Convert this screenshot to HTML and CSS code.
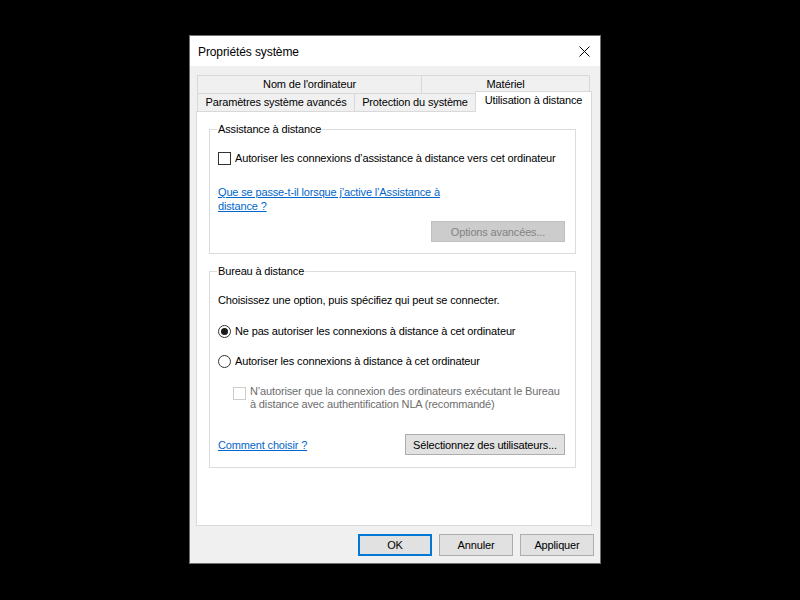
FILE: index.html
```html
<!DOCTYPE html>
<html lang="fr">
<head>
    <meta charset="UTF-8">
    <meta name="viewport" content="width=device-width, initial-scale=1.0">
    <title>Propriétés système</title>
    <link rel="stylesheet" href="styles.css">
</head>
<body>
    <div class="window">
        <div class="titlebar">
            <span class="title">Propriétés système</span>
            <span class="close">
                <svg width="11" height="11" viewBox="0 0 11 11">
                    <path d="M0.5 0.5 L10.5 10.5 M10.5 0.5 L0.5 10.5" stroke="#000" stroke-width="1" fill="none"/>
                </svg>
            </span>
        </div>
        <div class="body">
            <div class="tabs">
                <div class="tab-row">
                    <div class="tab t-nom">Nom de l'ordinateur</div>
                    <div class="tab t-mat">Matériel</div>
                </div>
                <div class="tab-row low">
                    <div class="tab t-par">Paramètres système avancés</div>
                    <div class="tab t-pro">Protection du système</div>
                    <div class="tab t-uti active">Utilisation à distance</div>
                </div>
            </div>
            <div class="panel">
                <fieldset class="group g-assist">
                    <legend>Assistance à distance</legend>
                    <label class="row check-row">
                        <span class="box"></span>
                        Autoriser les connexions d’assistance à distance vers cet ordinateur
                    </label>
                    <a class="link help" href="#">Que se passe-t-il lorsque j’active l’Assistance à<br>distance ?</a>
                    <div class="btn-line">
                        <button class="btn disabled" disabled>Options avancées...</button>
                    </div>
                </fieldset>
                <fieldset class="group g-bureau">
                    <legend>Bureau à distance</legend>
                    <p class="intro">Choisissez une option, puis spécifiez qui peut se connecter.</p>
                    <label class="row radio-row first">
                        <span class="radio checked"></span>
                        Ne pas autoriser les connexions à distance à cet ordinateur
                    </label>
                    <label class="row radio-row">
                        <span class="radio"></span>
                        Autoriser les connexions à distance à cet ordinateur
                    </label>
                    <label class="nla">
                        <span class="box off"></span>
                        <span class="nla-text">N’autoriser que la connexion des ordinateurs exécutant le Bureau<br>à distance avec authentification NLA (recommandé)</span>
                    </label>
                    <div class="btn-line split">
                        <a class="link" href="#">Comment choisir ?</a>
                        <button class="btn users">Sélectionnez des utilisateurs...</button>
                    </div>
                </fieldset>
            </div>
            <div class="footer">
                <button class="btn dlg default">OK</button>
                <button class="btn dlg">Annuler</button>
                <button class="btn dlg">Appliquer</button>
            </div>
        </div>
    </div>
</body>
</html>
```

FILE: styles.css
```css
/* Reset */
* {
    margin: 0;
    padding: 0;
    box-sizing: border-box;
}

body {
    background: #000;
    font-family: "Liberation Sans", Arial, sans-serif;
    font-size: 11px;
    letter-spacing: -0.15px;
    color: #000;
    padding: 35px 0 0 189px;
    height: 600px;
    overflow: hidden;
}

/* Dialog frame */
.window {
    width: 412px;
    height: 529px;
    border: 1px solid #6f6f6f;
    background: #f0f0f0;
    display: flex;
    flex-direction: column;
}

.titlebar {
    height: 30px;
    flex: none;
    background: #fff;
    display: flex;
    align-items: center;
    justify-content: space-between;
    padding: 0 10px 0 8px;
}

.title {
    font-size: 12px;
    letter-spacing: -0.1px;
    padding-top: 1px;
}

.close {
    display: flex;
}

.body {
    flex: 1;
    padding: 9px 0 0 6px;
}

/* Tabs */
.tab-row {
    display: flex;
    height: 18px;
    padding-left: 1px;
}

.tab-row.low {
    align-items: flex-end;
}

.tab {
    height: 18px;
    border: 1px solid #d9d9d9;
    border-bottom: none;
    background: #f0f0f0;
    text-align: center;
    line-height: 17px;
    white-space: nowrap;
}

.tab + .tab {
    margin-left: -1px;
}

.t-nom { width: 225px; }
.t-mat { width: 169px; }
.t-par { width: 158px; }
.t-pro { width: 122px; }

/* selected tab sits 2px higher and hides the page border below it */
.tab.active {
    width: 117px;
    height: 21px;
    background: #fff;
    margin-top: -2px;
    margin-bottom: -1px;
    line-height: 17px;
    position: relative;
    z-index: 1;
}

/* Tab page */
.panel {
    width: 396px;
    height: 415px;
    background: #fff;
    border: 1px solid #d9d9d9;
    padding: 0 15px 0 12px;
}

.group {
    border: 1px solid #dcdcdc;
    margin-top: 10px;
    padding: 0 10px 0 8px;
}

.group legend {
    line-height: 14px;
    padding: 0 1px;
    margin-left: -1px;
}

.row {
    display: flex;
    align-items: center;
    line-height: 15px;
    gap: 4px;
    white-space: nowrap;
}

.check-row {
    margin-top: 15px;
}

.box {
    width: 13px;
    height: 13px;
    border: 1px solid #333;
    background: #fff;
    flex: none;
}

.box.off {
    border-color: #cccccc;
}

.radio {
    width: 13px;
    height: 13px;
    border: 1px solid #333;
    border-radius: 50%;
    background: #fff;
    flex: none;
    display: flex;
    align-items: center;
    justify-content: center;
}

.radio.checked::after {
    content: "";
    width: 7px;
    height: 7px;
    border-radius: 50%;
    background: #1a1a1a;
}

.link {
    color: #0066cc;
    text-decoration: underline;
}

.help {
    display: block;
    margin-top: 19px;
    line-height: 14px;
}

.btn-line {
    display: flex;
    justify-content: flex-end;
    margin-top: 8px;
    padding-bottom: 11px;
}

.btn {
    font-family: inherit;
    font-size: 11px;
    letter-spacing: -0.15px;
    height: 21px;
    background: #e1e1e1;
    border: 1px solid #adadad;
    color: #000;
}

.btn.disabled {
    width: 134px;
    background: #cccccc;
    border-color: #bfbfbf;
    color: #838383;
}

.intro {
    margin-top: 15px;
    line-height: 14px;
}

.radio-row.first {
    margin-top: 17px;
}

.radio-row {
    margin-top: 15px;
}

.nla {
    display: flex;
    gap: 4px;
    margin: 16px 0 0 15px;
    line-height: 13px;
    color: #6d6d6d;
    white-space: nowrap;
}

.nla .box {
    margin-top: 2px;
}

.btn-line.split {
    justify-content: space-between;
    align-items: center;
    margin-top: 23px;
    padding-bottom: 12px;
}

.btn.users {
    width: 160px;
}

/* Dialog buttons */
.footer {
    display: flex;
    justify-content: flex-end;
    gap: 7px;
    margin-top: 8px;
    padding-right: 6px;
}

.btn.dlg {
    width: 74px;
    height: 22px;
}

.btn.default {
    border-color: #0078d7;
    box-shadow: inset 0 0 0 1px #0078d7;
}
```
